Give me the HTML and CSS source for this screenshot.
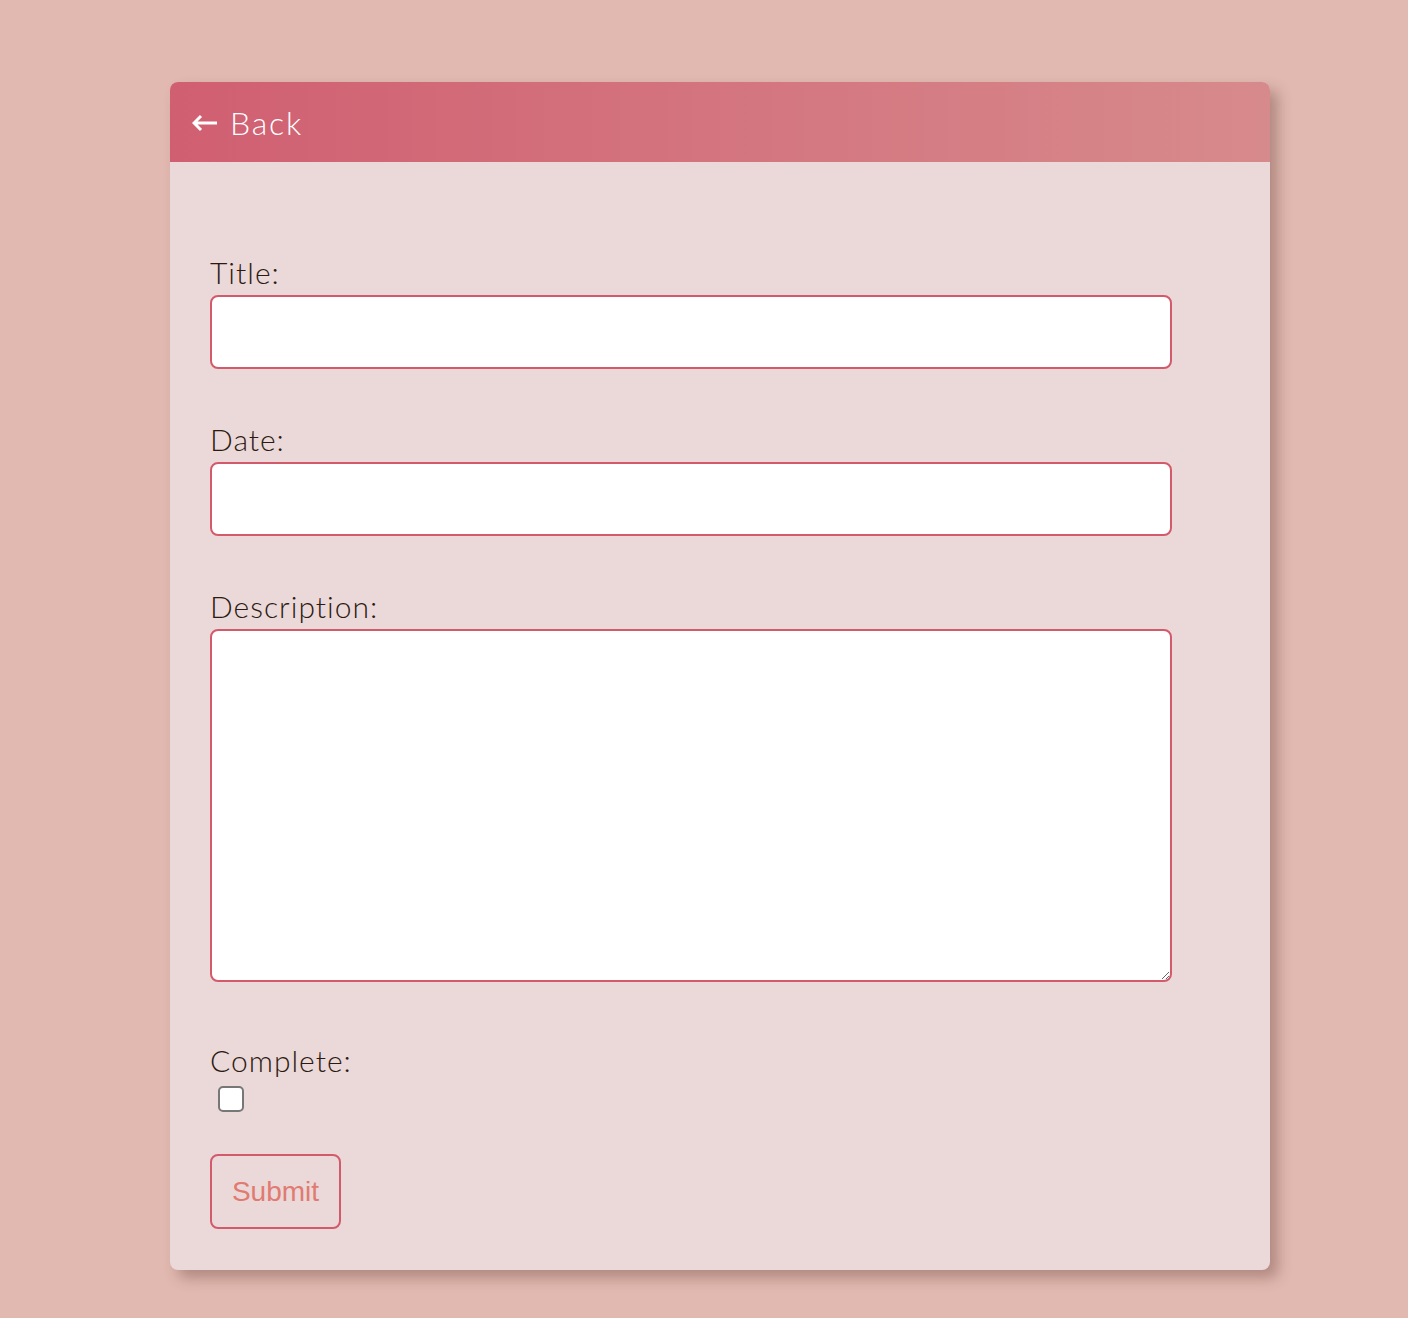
FILE: index.html
```html
<!DOCTYPE html>
<html lang="en">
<head>
  <meta charset="UTF-8">
  <meta name="viewport" content="width=device-width, initial-scale=1.0">
  <title>Edit Todo</title>
  <link rel="stylesheet" href="styles.css">
</head>
<body>
  <div class="card">
    <div class="card-header">
      <a href="#" class="back-link">
        <svg class="back-icon" width="26" height="18" viewBox="0 0 26 18">
          <path d="M2 9 H25 M9 2 L2 9 L9 16" fill="none" stroke="#fff" stroke-width="3"/>
        </svg>
        Back
      </a>
    </div>

    <form class="todo-form">
      <div class="field">
        <label for="title">Title:</label>
        <input type="text" id="title" class="text-input">
      </div>

      <div class="field">
        <label for="date">Date:</label>
        <input type="text" id="date" class="text-input">
      </div>

      <div class="field field-desc">
        <label for="description">Description:</label>
        <textarea id="description" class="text-area"></textarea>
      </div>

      <div class="field field-check">
        <label for="complete">Complete:</label>
        <input type="checkbox" id="complete" class="check">
      </div>

      <button type="submit" class="submit-btn">Submit</button>
    </form>
  </div>
</body>
</html>
```

FILE: styles.css
```css
body {
  margin: 0;
  background-color: #e1b9b0;
  font-family: Lato, "Open Sans", sans-serif;
  font-weight: 300;
  color: #2b1a12;
}

.card {
  width: 1100px;
  margin: 82px 0 48px 170px;
  background: #ebd8d8;
  border-radius: 8px;
  overflow: hidden;
  box-shadow: 8px 8px 14px rgba(90, 50, 40, 0.35);
}

.card-header {
  height: 80px;
  display: flex;
  align-items: center;
  padding-left: 22px;
  background: linear-gradient(to right, #d05f71, #d78a8c);
}

.back-link {
  display: flex;
  align-items: center;
  gap: 12px;
  color: #fff;
  text-decoration: none;
  font-size: 32px;
  letter-spacing: 1.8px;
  font-weight: 300;
}

.back-icon {
  margin-top: 2px;
}

.todo-form {
  padding: 92px 40px 41px;
}

.field {
  margin-bottom: 52px;
}

.field label {
  display: block;
  font-size: 30px;
  line-height: 36px;
  letter-spacing: 1px;
  margin-bottom: 5px;
}

.text-input,
.text-area {
  box-sizing: border-box;
  display: block;
  width: 962px;
  border: 2px solid #d35a6b;
  border-radius: 8px;
  background: #fff;
  font-size: 20px;
  padding: 8px 12px;
}

.text-input {
  height: 74px;
}

.text-area {
  height: 353px;
  resize: both;
}

.field-desc {
  margin-bottom: 60px;
}

.field-check {
  margin-bottom: 42px;
}

.check {
  appearance: none;
  width: 26px;
  height: 26px;
  margin: 8px 0 0 8px;
  display: block;
  border: 2px solid #777;
  border-radius: 5px;
  background: #fff;
  box-sizing: border-box;
}

.submit-btn {
  width: 131px;
  height: 75px;
  background: transparent;
  border: 2px solid #d35a6b;
  border-radius: 8px;
  color: #e07b72;
  font-family: "Liberation Sans", Arial, sans-serif;
  font-size: 28px;
  cursor: pointer;
}
```
